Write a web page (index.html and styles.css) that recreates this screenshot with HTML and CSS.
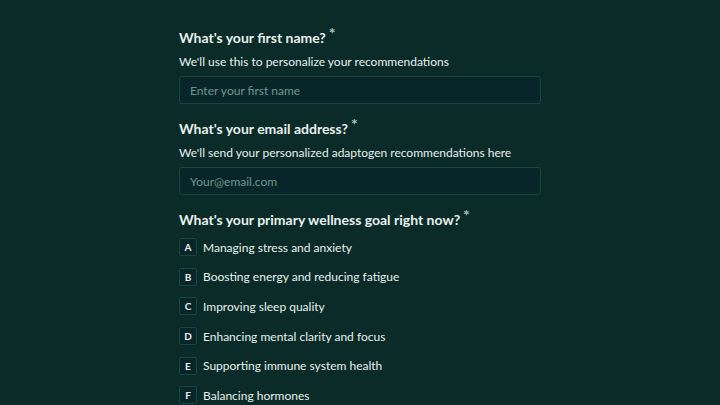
FILE: index.html
```html
<!DOCTYPE html>
<html lang="en">
<head>
    <meta charset="UTF-8">
    <meta name="viewport" content="width=device-width, initial-scale=1.0">
    <title>Adaptogen Quiz</title>
    <link rel="stylesheet" href="styles.css">
</head>
<body>
    <div class="container">
        <div class="question">
            <h2>What's your first name?<span class="req">*</span></h2>
            <p class="hint">We'll use this to personalize your recommendations</p>
            <input type="text" class="field" placeholder="Enter your first name">
        </div>

        <div class="question">
            <h2>What's your email address?<span class="req">*</span></h2>
            <p class="hint">We'll send your personalized adaptogen recommendations here</p>
            <input type="text" class="field" placeholder="Your@email.com">
        </div>

        <div class="question">
            <h2>What's your primary wellness goal right now?<span class="req">*</span></h2>
            <ul class="options">
                <li><span class="key">A</span>Managing stress and anxiety</li>
                <li><span class="key">B</span>Boosting energy and reducing fatigue</li>
                <li><span class="key">C</span>Improving sleep quality</li>
                <li><span class="key">D</span>Enhancing mental clarity and focus</li>
                <li><span class="key">E</span>Supporting immune system health</li>
                <li><span class="key">F</span>Balancing hormones</li>
            </ul>
        </div>
    </div>
</body>
</html>
```

FILE: styles.css
```css
body {
    margin: 0;
    font-family: Lato, sans-serif;
    background-color: #0a2b27;
    color: #e8f0ee;
}

.container {
    width: 362px;
    margin: 0 auto;
    padding-top: 23px;
}

.question {
    margin-bottom: 10px;
}

h2 {
    font-size: 14px;
    font-weight: 700;
    margin: 0 0 5px 0;
    line-height: 20px;
}

.req {
    font-size: 16px;
    font-weight: 700;
    color: #a9c4bf;
    margin-left: 3px;
    vertical-align: 4px;
}

.hint {
    font-size: 12px;
    margin: 0 0 5px 0;
    line-height: 18px;
}

.field {
    display: block;
    box-sizing: border-box;
    width: 100%;
    height: 28px;
    padding: 0 10px;
    background-color: #08262a;
    border: 1px solid #1b4741;
    border-radius: 3px;
    color: #e8f0ee;
    font-family: inherit;
    font-size: 12px;
}

.field::placeholder {
    color: #6f9690;
}

.options {
    list-style: none;
    margin: 0;
    padding: 2px 0 0 0;
}

.options li {
    display: flex;
    align-items: center;
    height: 20px;
    margin: 0 0 9.7px 0;
    font-size: 12px;
}

.key {
    display: inline-flex;
    align-items: center;
    justify-content: center;
    box-sizing: border-box;
    width: 18px;
    height: 18px;
    margin-right: 6px;
    border: 1px solid #1b4741;
    border-radius: 2px;
    background-color: #08262a;
    font-size: 10px;
    font-weight: 700;
}
```
